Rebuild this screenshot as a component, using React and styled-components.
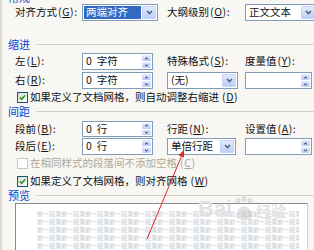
import React from 'react'
import styled, { createGlobalStyle } from 'styled-components'

const GlobalStyle = createGlobalStyle`
  html, body { margin: 0; padding: 0; }
  body { font-family: "Noto Sans CJK SC", "Noto Sans", sans-serif; }
`

const Page = styled.div`
  position: relative;
  width: 314px;
  height: 250px;
  overflow: hidden;
  box-sizing: border-box;
  background: #f8f7f3;
  border-left: 2px solid #dedcd2;
  font-size: 10.5px;
  line-height: 1;
  color: #111;
  display: flex;
  flex-direction: column;
`

const GroupHeader = styled.div`
  display: flex;
  align-items: center;
  gap: 6px;
  flex: none;
  height: 14px;
  margin-top: ${p => p.$top || 0}px;
  padding-left: 6px;
  color: #0046d5;
  font-size: 11px;

  &::after {
    content: '';
    flex: 1;
    height: 1px;
    background: #d3d2c4;
  }
`

const Row = styled.div`
  display: grid;
  grid-template-columns: 67px 85px 78px 1fr;
  align-items: center;
  flex: none;
  height: ${p => p.$h || 17}px;
  margin-top: ${p => p.$top || 0}px;
  padding-left: 13px;
  white-space: nowrap;
`

const Label = styled.span`
  display: block;
  white-space: nowrap;
`

const Mnemonic = styled.span`
  letter-spacing: 0.6px;
  margin-left: 1px;

  u {
    text-decoration-thickness: 1px;
  }
`

const Box = styled.div`
  box-sizing: border-box;
  display: flex;
  align-items: stretch;
  width: ${p => p.$w}px;
  height: ${p => p.$h || 17}px;
  border: 1px solid #7f9db9;
  background: #fff;
`

const BoxText = styled.span`
  flex: 1;
  display: flex;
  align-items: center;
  gap: 5px;
  margin: 1px;
  padding-left: 2px;
  background: ${p => (p.$selected ? '#316ac5' : 'transparent')};
  color: ${p => (p.$selected ? '#fff' : '#111')};
  white-space: nowrap;
  overflow: hidden;
`

const DropButton = styled.span`
  width: 14px;
  margin: 1px 1px 1px 0;
  border-radius: 1px;
  background: linear-gradient(#e3ebfd, #bccff8);
  border: 1px solid #c3d3fd;
  box-sizing: border-box;
  display: flex;
  align-items: center;
  justify-content: center;
`

const SpinColumn = styled.span`
  width: 9px;
  margin: 1px 1px 1px 0;
  display: flex;
  flex-direction: column;
  gap: 1px;
`

const SpinButton = styled.span`
  flex: 1;
  border-radius: 1px;
  background: linear-gradient(#e3ebfd, #bccff8);
  display: flex;
  align-items: center;
  justify-content: center;
`

const CheckRow = styled.label`
  display: flex;
  align-items: center;
  gap: 2px;
  flex: none;
  height: 11px;
  margin-top: ${p => p.$top || 0}px;
  padding-left: 15px;
  white-space: nowrap;
  color: ${p => (p.$disabled ? '#aca899' : '#111')};
`

const CheckBox = styled.span`
  box-sizing: border-box;
  width: 11px;
  height: 11px;
  border: 1px solid ${p => (p.$disabled ? '#cac8bb' : '#1c5180')};
  background: ${p => (p.$disabled ? '#fff' : 'linear-gradient(135deg, #dcdcd7, #fff)')};
  display: flex;
  align-items: center;
  justify-content: center;
`

const Preview = styled.div`
  position: relative;
  flex: none;
  box-sizing: border-box;
  height: 60px;
  margin: 1px 6px 0 13px;
  padding: 6px 0 0 21px;
  background: #fff;
  border: 1px solid #8c8c8c;
  border-right-color: #d0d0d0;
`

const PreviewLine = styled.div`
  width: 262px;
  height: 8px;
  overflow: hidden;
  white-space: nowrap;
  font-size: 6px;
  line-height: 8px;
  color: #c6c6c6;
`

const Watermark = styled.div`
  position: absolute;
  left: 196px;
  top: 196px;
  display: flex;
  align-items: flex-end;
  gap: 1px;
  color: rgba(190, 190, 190, 0.45);
  text-shadow: 0 0 1px #fff;
  font-family: "Liberation Sans", Arial, sans-serif;
  font-weight: bold;
  pointer-events: none;
`

const WaterBig = styled.span`
  font-size: 22px;
  line-height: 22px;
`

const WaterSmall = styled.span`
  font-family: "Noto Sans CJK SC", sans-serif;
  font-size: 15px;
  line-height: 18px;
`

const Annotation = styled.svg`
  position: absolute;
  left: 0;
  top: 0;
  pointer-events: none;
`

const Chevron = ({ up, small }) => (
  <svg width={small ? 5 : 7} height={small ? 3 : 5} viewBox="0 0 7 5">
    <path
      d={up ? 'M1 4 L3.5 1.5 L6 4' : 'M1 1 L3.5 3.5 L6 1'}
      fill="none"
      stroke="#4d6185"
      strokeWidth={small ? 1.8 : 1.6}
    />
  </svg>
)

const Key = ({ k }) => (
  <Mnemonic>(<u>{k}</u>)</Mnemonic>
)

const Select = ({ w, value, selected }) => (
  <Box $w={w}>
    <BoxText $selected={selected}>{value}</BoxText>
    <DropButton>
      <Chevron />
    </DropButton>
  </Box>
)

const Spin = ({ w, h, num, unit }) => (
  <Box $w={w} $h={h}>
    <BoxText>
      {num !== undefined && <span>{num}</span>}
      {unit && <span>{unit}</span>}
    </BoxText>
    <SpinColumn>
      <SpinButton><Chevron up small /></SpinButton>
      <SpinButton><Chevron small /></SpinButton>
    </SpinColumn>
  </Box>
)

const Check = ({ checked, disabled, top, children }) => (
  <CheckRow $top={top} $disabled={disabled}>
    <CheckBox $disabled={disabled}>
      {checked && (
        <svg width="7" height="7" viewBox="0 0 7 7">
          <path d="M0.8 3.4 L2.7 5.3 L6.2 1.3" fill="none" stroke="#21a121" strokeWidth="1.6" />
        </svg>
      )}
    </CheckBox>
    {children}
  </CheckRow>
)

const previewText = '前一段落前一段落前一段落前一段落前一段落前一段落前一段落前一段落前一段落前一段落前一段落'

export default function App () {
  return (
    <>
      <GlobalStyle />
      <Page>
        <GroupHeader $top={-10}>常规</GroupHeader>
        <Row>
          <Label>对齐方式<Key k="G" />:</Label>
          <Select w={76} value="两端对齐" selected />
          <Label>大纲级别<Key k="O" />:</Label>
          <Select w={72} value="正文文本" />
        </Row>

        <GroupHeader $top={16}>缩进</GroupHeader>
        <Row $top={2}>
          <Label>左<Key k="L" />:</Label>
          <Spin w={71} num="0" unit="字符" />
          <Label>特殊格式<Key k="S" />:</Label>
          <Label>度量值<Key k="Y" />:</Label>
        </Row>
        <Row $top={2}>
          <Label>右<Key k="R" />:</Label>
          <Spin w={71} num="0" unit="字符" />
          <Select w={71} value="(无)" />
          <Spin w={67} />
        </Row>
        <Check checked top={3}>如果定义了文档网格，则自动调整右缩进<Key k="D" /></Check>

        <GroupHeader $top={1}>间距</GroupHeader>
        <Row $top={3} $h={16}>
          <Label>段前<Key k="B" />:</Label>
          <Spin w={71} h={16} num="0" unit="行" />
          <Label>行距<Key k="N" />:</Label>
          <Label>设置值<Key k="A" />:</Label>
        </Row>
        <Row $top={1}>
          <Label>段后<Key k="E" />:</Label>
          <Spin w={71} num="0" unit="行" />
          <Select w={69} value="单倍行距" />
          <Spin w={67} />
        </Row>
        <Check disabled top={3}>在相同样式的段落间不添加空格<Key k="C" /></Check>
        <Check checked top={7}>如果定义了文档网格，则对齐网格<Key k="W" /></Check>

        <GroupHeader $top={1}>预览</GroupHeader>
        <Preview>
          {[0, 1, 2, 3, 4, 5].map(i => (
            <PreviewLine key={i}>{previewText}</PreviewLine>
          ))}
        </Preview>

        <Watermark>
          <WaterBig>Bai</WaterBig>
          <svg width="22" height="24" viewBox="0 0 22 24">
            <g fill="rgba(190,190,190,0.45)">
              <ellipse cx="5" cy="5" rx="2.5" ry="3" />
              <ellipse cx="11" cy="3" rx="2.5" ry="3" />
              <ellipse cx="17" cy="5" rx="2.5" ry="3" />
              <path d="M3 20 Q4 11 11 10 Q18 11 19 20 Q19 24 11 23 Q3 24 3 20 Z" />
            </g>
          </svg>
          <WaterSmall>经验</WaterSmall>
        </Watermark>

        <Annotation width="314" height="250" viewBox="0 0 314 250">
          <line x1="145" y1="239" x2="180" y2="155" stroke="#e3262b" strokeWidth="1" />
          <polygon points="182,150 182.1,157.6 176.5,155.2" fill="#e3262b" />
        </Annotation>
      </Page>
    </>
  )
}
